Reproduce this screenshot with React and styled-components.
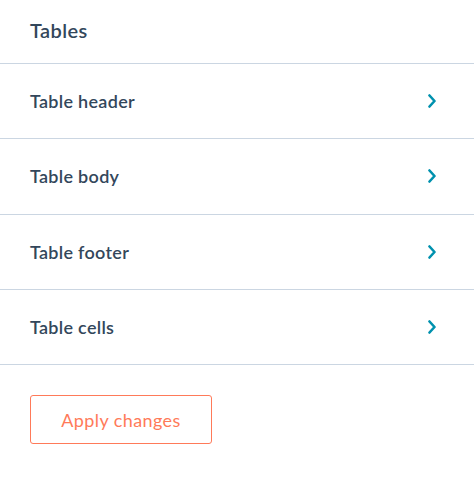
import styled, { createGlobalStyle } from "styled-components";

const GlobalStyle = createGlobalStyle`
  body {
    margin: 0;
    background: #fff;
    font-family: Lato, "Open Sans", sans-serif;
    color: #33475b;
  }
`;

const sections = ["Table header", "Table body", "Table footer", "Table cells"];

const Chevron = () => (
  <svg width="10" height="14" viewBox="0 0 10 14" fill="none">
    <path
      d="M2.5 1.5 L7.5 7 L2.5 12.5"
      stroke="#0091ae"
      strokeWidth="2.6"
      strokeLinecap="round"
      strokeLinejoin="round"
    />
  </svg>
);

const App = () => {
  return (
    <Panel>
      <GlobalStyle />
      <Header>Tables</Header>
      <List>
        {sections.map((name) => (
          <Row key={name}>
            <span>{name}</span>
            <Chevron />
          </Row>
        ))}
      </List>
      <Footer>
        <ApplyButton>Apply changes</ApplyButton>
      </Footer>
    </Panel>
  );
};

export default App;

// Styled Components

const Panel = styled.div`
  width: 474px;
  display: flex;
  flex-direction: column;
`;

const Header = styled.h2`
  margin: 0;
  height: 60px;
  padding: 0 30px 3px;
  display: flex;
  align-items: center;
  font-size: 20px;
  font-weight: 600;
  letter-spacing: 0.4px;
  border-bottom: 1px solid #cbd6e2;
`;

const List = styled.div`
  display: flex;
  flex-direction: column;
`;

const Row = styled.div`
  height: 74.25px;
  padding: 0 37px 0 30px;
  display: flex;
  align-items: center;
  justify-content: space-between;
  border-bottom: 1px solid #cbd6e2;
  font-size: 18px;
  font-weight: 600;
  letter-spacing: 0.3px;
  cursor: pointer;
`;

const Footer = styled.div`
  padding: 30px 30px;
`;

const ApplyButton = styled.button`
  width: 182px;
  height: 49px;
  background: #fff;
  border: 1px solid #ff7a59;
  border-radius: 3px;
  color: #ff7a59;
  font-family: Lato, "Open Sans", sans-serif;
  font-size: 18px;
  font-weight: 400;
  letter-spacing: 0.4px;
  cursor: pointer;
`;
